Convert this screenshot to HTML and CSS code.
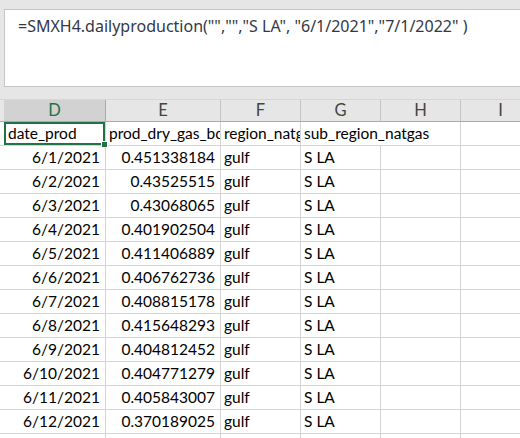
FILE: index.html
```html
<!DOCTYPE html>
<html lang="en">
  <head>
    <meta charset="UTF-8" />
    <title>Sheet</title>
    <link rel="stylesheet" href="styles.css">
  </head>
  <body>
    <div class="formula-bar">
      <p class="formula-text">=SMXH4.dailyproduction("","","S LA", "6/1/2021","7/1/2022" )</p>
    </div>

    <div class="sheet">
      <div class="row head-row">
        <div class="stub"></div>
        <div class="col-head selected">D</div>
        <div class="col-head">E</div>
        <div class="col-head">F</div>
        <div class="col-head">G</div>
        <div class="col-head">H</div>
        <div class="col-head">I</div>
      </div>

      <div class="row">
        <div class="stub"></div>
        <div class="cell active">date_prod</div>
        <div class="cell">prod_dry_gas_bcfd</div>
        <div class="cell">region_natgas</div>
        <div class="cell wide">sub_region_natgas</div>
        <div class="cell"></div>
      </div>
    </div>

    <script>
      const rows = [
        ["6/1/2021", "0.451338184"],
        ["6/2/2021", "0.43525515"],
        ["6/3/2021", "0.43068065"],
        ["6/4/2021", "0.401902504"],
        ["6/5/2021", "0.411406889"],
        ["6/6/2021", "0.406762736"],
        ["6/7/2021", "0.408815178"],
        ["6/8/2021", "0.415648293"],
        ["6/9/2021", "0.404812452"],
        ["6/10/2021", "0.404771279"],
        ["6/11/2021", "0.405843007"],
        ["6/12/2021", "0.370189025"],
        ["", ""],
      ];

      const sheet = document.querySelector(".sheet");
      rows.forEach((r) => {
        const row = document.createElement("div");
        row.className = "row";
        const cells = [
          ["stub", ""],
          ["cell num", r[0]],
          ["cell num", r[1]],
          ["cell", r[0] ? "gulf" : ""],
          ["cell", r[0] ? "S LA" : ""],
          ["cell", ""],
          ["cell", ""],
        ];
        cells.forEach(([cls, text]) => {
          const div = document.createElement("div");
          div.className = cls;
          div.textContent = text;
          row.appendChild(div);
        });
        sheet.appendChild(row);
      });
    </script>
  </body>
</html>
```

FILE: styles.css
```css
* {
  margin: 0;
  padding: 0;
  box-sizing: border-box;
}

body {
  background-color: #e6e6e6;
  font-family: "Lato", "Liberation Sans", sans-serif;
  width: 520px;
  height: 438px;
  overflow: hidden;
}

.formula-bar {
  margin: 9px 0 0 4px;
  height: 78px;
  background-color: #fff;
  border: 1px solid #c6c6c6;
  border-right: none;
}

.formula-text {
  font-family: "Noto Sans", "Open Sans", sans-serif;
  font-size: 16px;
  color: #333846;
  padding: 5px 0 0 13px;
  white-space: nowrap;
}

.sheet {
  margin-top: 12px;
  background-color: #fff;
}

.row {
  display: grid;
  grid-template-columns: 4px 102px 115px 80px 80px 80px 80px;
  height: 24px;
  font-size: 15.5px;
  color: #000;
}

.head-row {
  height: 23px;
  background-color: #e6e6e6;
  border-top: 1px solid #d6d6d6;
  border-bottom: 1px solid #ababab;
}

.col-head {
  text-align: center;
  line-height: 21px;
  font-size: 16.5px;
  color: #444;
  border-right: 1px solid #c4c4c4;
}

.col-head.selected {
  background-color: #d2d2d2;
  color: #217346;
  border-right-color: #ababab;
}

.stub {
  border-bottom: 1px solid #d4d4d4;
}

.head-row .stub {
  border-bottom: none;
}

.cell {
  border-right: 1px solid #d4d4d4;
  border-bottom: 1px solid #d4d4d4;
  line-height: 23px;
  padding: 0 3px;
  white-space: nowrap;
  overflow: hidden;
}

.cell.num {
  text-align: right;
  padding-right: 5px;
}

.cell.wide {
  grid-column: span 2;
}

.cell.active {
  position: relative;
  overflow: visible;
  box-shadow: inset 0 0 0 2px #217346;
  padding-left: 4px;
}

.cell.active::after {
  content: "";
  position: absolute;
  right: -3px;
  bottom: -3px;
  width: 5px;
  height: 5px;
  background-color: #217346;
  border: 1px solid #fff;
}
```
